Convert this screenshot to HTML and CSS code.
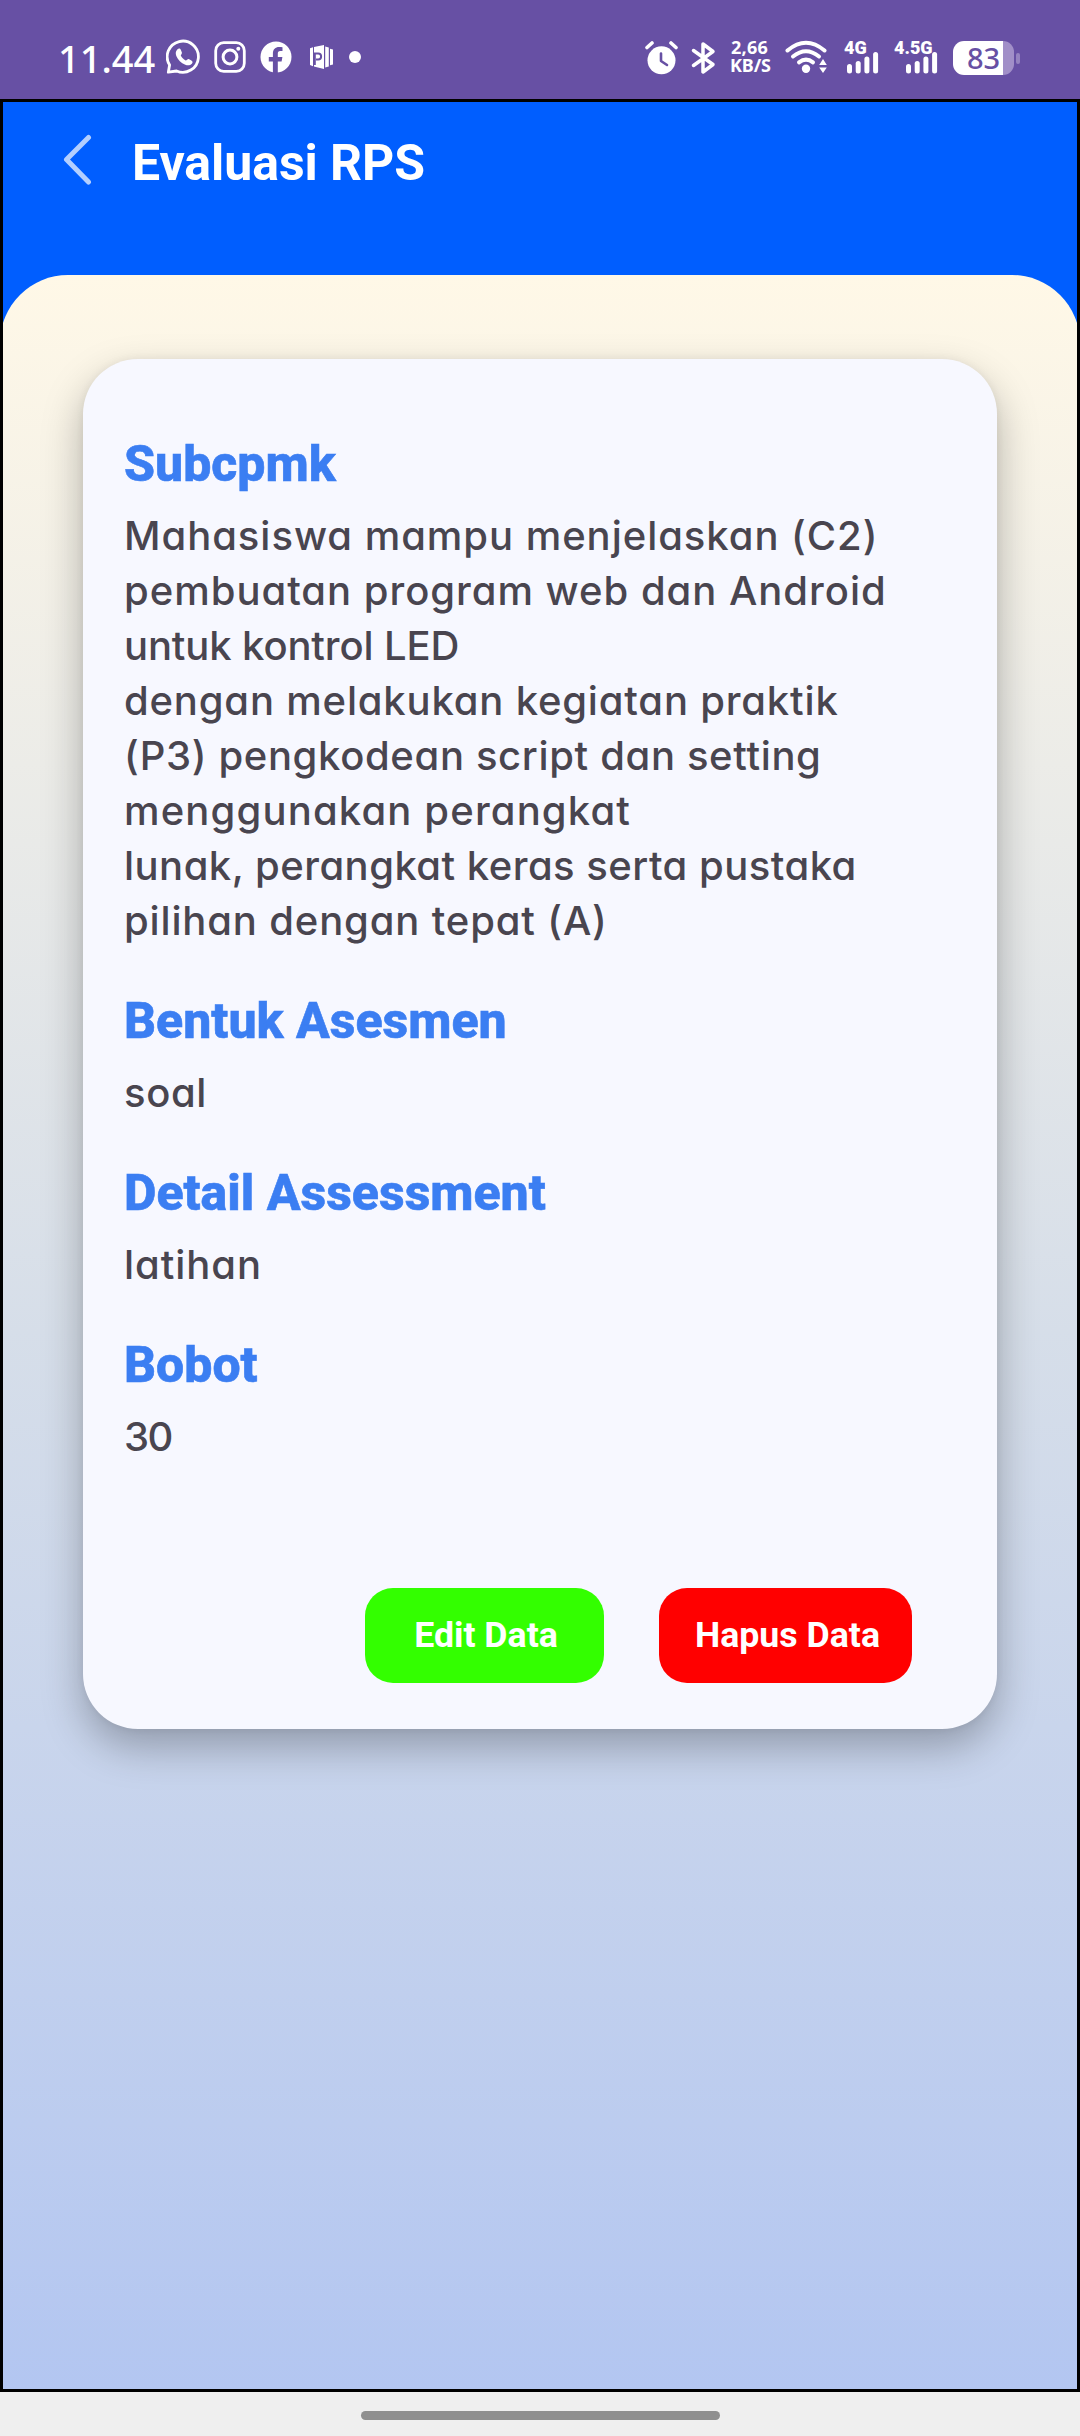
FILE: index.html
```html
<!DOCTYPE html>
<html lang="id">
<head>
<meta charset="utf-8">
<title>Evaluasi RPS</title>
<link rel="stylesheet" href="styles.css">
</head>
<body>
<div class="status">
  <span class="clock">11.44</span>
  <svg class="ic whatsapp" width="36" height="36" viewBox="0 0 36 36"><path d="M2.3 33.2 3.6 26A15.6 15.6 0 1 1 10.6 32Z" fill="none" stroke="#fff" stroke-width="2.8" stroke-linejoin="round"/><path d="M11.5 10.3c1.2-1.2 2.7-.9 3.3.5l1.1 2.6c.4.9-1.1 2.4-1.1 3.2.9 2 2.7 3.8 4.9 4.8.9.2 2-1.7 3-1.3l2.7 1.3c1.4.7 1.5 2.2.4 3.3-1.7 1.8-4.1 2-6.5 1-4.3-1.8-7.3-4.7-9-8.7-1-2.5-.6-5 1.2-6.7z" fill="#fff"/></svg>
  <svg class="ic instagram" width="32" height="32" viewBox="0 0 32 32" fill="none" stroke="#fff"><rect x="1.7" y="1.7" width="28.6" height="28.6" rx="8" stroke-width="2.8"/><circle cx="16" cy="16" r="6.9" stroke-width="3"/><circle cx="24.3" cy="7.7" r="2" fill="#fff" stroke="none"/></svg>
  <svg class="ic facebook" width="32" height="32" viewBox="0 0 32 32"><circle cx="16" cy="16" r="15.5" fill="#fff"/><path d="M12.9 32V20.5H8.8V16h4.1v-3.5c0-4.2 2.5-6.5 6.2-6.5 1.3 0 2.4.1 3.4.3V10h-2.200c-2 0-2.500 1-2.500 2.400V16h4.600l-.8 4.500h-3.800V32z" fill="#6750a4"/></svg>
  <svg class="ic slides" width="24" height="24" viewBox="0 0 24 24"><path d="M0 3.200 3 2.200v19L0 20zM4 2 14 0v24L4 21.500zM15.200 1.500l3.600 1v19l-3.600 1zM20 3.800l3 .8v14.800l-3 .8z" fill="#fff"/><path d="M4.800 20V8.600h3.400a2.900 2.900 0 0 1 0 5.800H6" fill="none" stroke="#6750a4" stroke-width="2"/></svg>
  <i class="dot"></i>
  <span class="spacer"></span>
  <svg class="ic alarm" width="33" height="34" viewBox="0 0 33 34"><circle cx="16.500" cy="19.300" r="14" fill="#fff"/><path d="M2 6.500 7 2M31 6.500 26 2" stroke="#fff" stroke-width="3.600" stroke-linecap="round"/><path d="M16 12.500v7.500l6 4" fill="none" stroke="#6750a4" stroke-width="2.600" stroke-linecap="round" stroke-linejoin="round"/></svg>
  <svg class="ic bluetooth" width="25" height="34" viewBox="0 0 25 34"><path d="M2.500 9.500 22 23.500 12 31V3l10 7.500L2.500 24.500" fill="none" stroke="#fff" stroke-width="3.500" stroke-linecap="round" stroke-linejoin="round"/></svg>
  <span class="speed"><b class="rate">2,66</b><b>KB/S</b></span>
  <svg class="ic wifi" width="43" height="34" viewBox="0 0 43 34"><g fill="none" stroke="#fff" stroke-width="4" stroke-linecap="round"><path d="M2.500 10.500Q21 -5 39.500 10.500"/><path d="M8 16.500Q21 6 34 16.500"/><path d="M14 22.300Q21 17 28 22.300"/></g><circle cx="21" cy="28.800" r="4.200" fill="#fff"/><path d="m38 19 3.800 6h-7.600zM38 33l3.800-5.500h-7.600z" fill="#fff"/></svg>
  <span class="signal s4"><b>4G</b><svg width="32" height="22" viewBox="0 0 32 22" fill="#fff"><rect y="12" width="5" height="9.500" rx="2.500"/><rect x="8.700" y="9" width="5" height="12.500" rx="2.500"/><rect x="17.400" y="4.500" width="5" height="17" rx="2.500"/><rect x="26.100" width="5" height="21.500" rx="2.500"/></svg></span>
  <span class="signal s45"><b>4.5G</b><svg width="32" height="22" viewBox="0 0 32 22" fill="#fff"><rect y="12" width="5" height="9.500" rx="2.500"/><rect x="8.700" y="9" width="5" height="12.500" rx="2.500"/><rect x="17.400" y="4.500" width="5" height="17" rx="2.500"/><rect x="26.100" width="5" height="21.500" rx="2.500"/></svg></span>
  <span class="battery">83</span><i class="nub"></i>
</div>
<main class="screen">
  <header class="bar">
    <svg class="back" width="30" height="52" viewBox="0 0 30 52"><path d="M26.500 3.500 4.500 25.500l22 22.500" fill="none" stroke="#b3cfff" stroke-width="5" stroke-linecap="round" stroke-linejoin="round"/></svg>
    <h1>Evaluasi RPS</h1>
  </header>
  <div class="panel">
    <section class="card">
      <h2>Subcpmk</h2>
      <p><span class="l1">Mahasiswa mampu menjelaskan (C2)</span><span class="l2">pembuatan program web dan Android</span><span class="l3">untuk kontrol LED</span><span class="l4">dengan melakukan kegiatan praktik</span><span class="l5">(P3) pengkodean script dan setting</span><span class="l6">menggunakan perangkat</span><span class="l7">lunak, perangkat keras serta pustaka</span><span class="l8">pilihan dengan tepat (A)</span></p>
      <h2>Bentuk Asesmen</h2>
      <p><span class="v1">soal</span></p>
      <h2>Detail Assessment</h2>
      <p><span class="v2">latihan</span></p>
      <h2>Bobot</h2>
      <p><span class="v3">30</span></p>
      <div class="actions"><button class="edit">Edit Data</button><button class="delete">Hapus Data</button></div>
    </section>
  </div>
</main>
<footer class="nav"><i></i></footer>
</body>
</html>
```
FILE: styles.css
```css
* { box-sizing: border-box; }
body { margin: 0; width: 1080px; height: 2436px; background: #efefef; font-family: Roboto, sans-serif; display: flex; flex-direction: column; overflow: hidden; }
.status { height: 99px; flex: none; background: #6750a4; color: #fff; display: flex; align-items: flex-start; padding-left: 58px; font-family: "Noto Sans", sans-serif; }
.ic { display: block; flex: none; margin-top: 41px; }
.clock { width: 107px; margin-top: 32px; font-size: 38px; line-height: 52px; font-weight: 500; white-space: nowrap; }
.whatsapp { margin-top: 39px; margin-left: 1px; }
.instagram { margin-left: 12px; }
.facebook { margin-left: 14px; }
.slides { margin-top: 45px; margin-left: 18px; }
.dot { width: 12px; height: 12px; border-radius: 50%; background: #fff; margin: 51px 0 0 15px; }
.spacer { width: 284px; }
.bluetooth { margin-left: 13px; margin-right: 1px; }
.speed { width: 54px; margin-left: 13px; margin-right: 1px; margin-top: 38px; display: flex; flex-direction: column; font-size: 18px; line-height: 18px; letter-spacing: -0.1px; }
.speed .rate { padding-left: 1px; letter-spacing: 0.3px; }
.wifi { margin-top: 40px; }
.signal { display: flex; flex-direction: column; margin-top: 38px; font: 700 18px/20px Roboto, sans-serif; }
.signal svg { display: block; margin: -6px 0 0 3px; }
.s4 { width: 50px; margin-left: 16px; }
.s45 { width: 59px; }
.s45 svg { margin-left: 12px; }
.battery { width: 61px; height: 34px; margin-top: 41px; border-radius: 11px; background: linear-gradient(90deg, #fff 50px, #a18fc8 50px); color: #6750a4; font-size: 29px; line-height: 34px; font-weight: 500; padding-left: 14px; }
.nub { width: 4px; height: 11px; margin: 53px 0 0 2px; border-radius: 2px; background: #9583c0; }
.screen { flex: none; height: 2293px; border: 3px solid #000; background: #005eff; display: flex; flex-direction: column; overflow: hidden; }
.bar { height: 172.5px; flex: none; display: flex; align-items: flex-start; padding: 32px 0 0 59px; }
.bar h1 { margin: -1px 0 0 40px; font-size: 50px; line-height: 60px; color: #fff; font-weight: 700; letter-spacing: -0.05px; white-space: nowrap; }
.panel { flex: 1; margin: 0 -3px; border-radius: 68px 68px 0 0; background: linear-gradient(#fff8e7, #d6dee9 50%, #b3c6f1); padding: 84.5px 83px 0; }
.card { height: 1370px; border-radius: 55px; background: #f7f8ff; padding: 75px 41px 0; box-shadow: 0 18px 42px rgba(0,0,0,.28), 0 0 8px rgba(0,0,0,.06); display: flex; flex-direction: column; }
.card h2 { margin: 0; font-size: 50px; line-height: 60px; height: 60px; font-weight: 800; color: #3b7ef2; -webkit-text-stroke: 0.6px #3b7ef2; white-space: nowrap; }
.card p { margin: 14px 0 43px; font: 450 40px/55px Inter, sans-serif; font-feature-settings: "cv11"; color: #49454f; }
.card p span { display: block; white-space: nowrap; }
.l1 { letter-spacing: 0.96px; }
.l2 { letter-spacing: 0.98px; }
.l3 { letter-spacing: -0.13px; }
.l4 { letter-spacing: 0.82px; }
.l5 { letter-spacing: 0.65px; }
.l6 { letter-spacing: 1.16px; }
.l7 { letter-spacing: 0.48px; }
.l8 { letter-spacing: 0.85px; }
.v1 { letter-spacing: 0.6px; }
.v2 { letter-spacing: 0.96px; }
.v3 { letter-spacing: -1.5px; }
.actions { display: flex; justify-content: flex-end; gap: 55px; margin: 81px 44px 0 0; }
.actions button { height: 95px; border: 0; border-radius: 28px; padding: 0 0 2px 3px; color: #fff; font: 700 35.7px/42px Roboto, sans-serif; white-space: nowrap; }
.actions .edit { width: 239px; background: #3f0; }
.actions .delete { width: 253px; background: #f00; padding-left: 4px; }
.nav { flex: 1; display: flex; justify-content: center; padding-top: 19px; }
.nav i { width: 359px; height: 9px; border-radius: 5px; background: #8f8f8f; }
```
